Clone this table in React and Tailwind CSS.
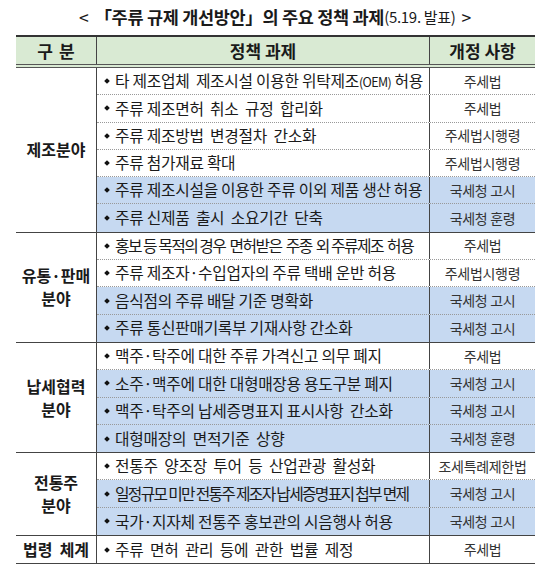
const sections = [
  {
    label: ['제조분야'],
    rows: [
      ['타 제조업체  제조시설 이용한 위탁제조|(OEM)| 허용', '주세법', false],
      ['주류 제조면허  취소  규정  합리화', '주세법', false],
      ['주류 제조방법  변경절차  간소화', '주세법시행령', false],
      ['주류 첨가재료 확대', '주세법시행령', false],
      ['주류 제조시설을 이용한 주류 이외 제품 생산 허용', '국세청 고시', true],
      ['주류 신제품  출시  소요기간  단축', '국세청 훈령', true],
    ],
  },
  {
    label: ['유통·판매', '분야'],
    rows: [
      ['홍보 등 목적의 경우  면허받은  주종  외 주류제조  허용', '주세법', false, -1.5],
      ['주류 제조자·수입업자의 주류 택배 운반 허용', '주세법시행령', false],
      ['음식점의 주류 배달 기준 명확화', '국세청 고시', true],
      ['주류 통신판매기록부 기재사항 간소화', '국세청 고시', true],
    ],
  },
  {
    label: ['납세협력', '분야'],
    rows: [
      ['맥주·탁주에 대한 주류 가격신고 의무 폐지', '주세법', false],
      ['소주·맥주에 대한 대형매장용 용도구분 폐지', '국세청 고시', true],
      ['맥주·탁주의 납세증명표지 표시사항  간소화', '국세청 고시', true],
      ['대형매장의  면적기준  상향', '국세청 훈령', true],
    ],
  },
  {
    label: ['전통주', '분야'],
    rows: [
      ['전통주  양조장  투어  등  산업관광  활성화', '조세특례제한법', false],
      ['일정규모 미만 전통주 제조자 납세증명표지 첩부 면제', '국세청 고시', true, -1.7],
      ['국가·지자체 전통주 홍보관의 시음행사 허용', '국세청 고시', true],
    ],
  },
  {
    label: ['법령  체계'],
    rows: [['주류  면허  관리  등에  관한  법률  제정', '주세법', false]],
  },
]

function RowText({ text }) {
  const parts = text.split('|')
  return parts.map((p, i) =>
    i === 1 ? (
      <span key={i} className="text-[12.5px] tracking-[-0.6px]">
        {p}
      </span>
    ) : (
      <span key={i}>{p}</span>
    )
  )
}

export default function App() {
  return (
    <div className="w-[550px] h-[566px] bg-white text-[#1a1a1a] font-['Noto_Sans_CJK_KR',sans-serif]">
      <div className="h-[35px] flex items-center justify-center text-[17.5px] tracking-[-0.3px]">
        <span className="mr-1.5">&lt;</span>
        <span className="font-bold">「주류 규제 개선방안」의 주요 정책 과제</span>
        <span className="text-[15px]">(5.19. 발표)</span>
        <span className="ml-1.5">&gt;</span>
      </div>

      <div className="ml-4 w-[519px] border-t-2 border-[#333]">
        <div className="grid grid-cols-[81px_333px_105px] h-[31px] bg-[#d9ead3] border-b-4 border-double border-[#555] font-bold text-[17px]">
          <div className="flex items-center justify-center border-r border-[#444] tracking-[6px] pl-[6px]">구분</div>
          <div className="flex items-center justify-center border-r border-[#444]">정책 과제</div>
          <div className="flex items-center justify-center">개정 사항</div>
        </div>

        {sections.map((s, si) => (
          <div key={si} className="flex border-b border-[#444]">
            <div className="w-[81px] shrink-0 flex flex-col items-center justify-center border-r border-[#444] font-bold text-[16px] leading-[23px] whitespace-pre">
              {s.label.map((l) => (
                <div key={l}>{l}</div>
              ))}
            </div>
            <div className="flex-1">
              {s.rows.map(([text, law, blue, track], ri) => (
                <div
                  key={ri}
                  className={
                    'grid grid-cols-[333px_105px] h-[27.3px] ' +
                    (ri < s.rows.length - 1 ? 'border-b border-dotted border-[#999] ' : '') +
                    (blue ? 'bg-[#c6d9f1]' : 'bg-white')
                  }
                >
                  <div className="flex items-center pl-[8px] border-r border-[#444] text-[15.8px] whitespace-pre overflow-hidden">
                    <span className="w-[4px] h-[4px] bg-[#111] rotate-45 mr-[6px] shrink-0"></span>
                    <span style={{ letterSpacing: (track ?? -0.3) + 'px' }}>
                      <RowText text={text} />
                    </span>
                  </div>
                  <div className="flex items-center justify-center text-[14px] tracking-[-0.3px] text-[#333] whitespace-pre">{law}</div>
                </div>
              ))}
            </div>
          </div>
        ))}
      </div>
    </div>
  )
}
